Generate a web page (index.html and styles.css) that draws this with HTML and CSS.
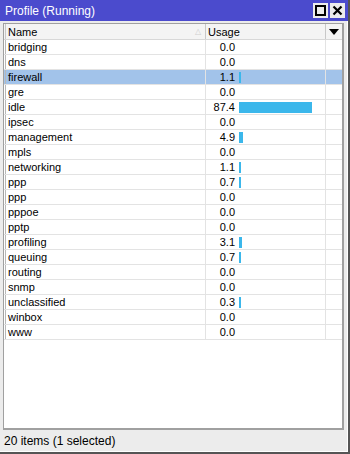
FILE: index.html
```html
<!DOCTYPE html>
<html lang="en">
<head>
  <meta charset="UTF-8">
  <title>Profile (Running)</title>
  <link rel="stylesheet" href="styles.css">
</head>
<body>
  <div class="window">
    <header class="titlebar">
      <span class="title">Profile (Running)</span>
      <div class="title-buttons">
        <button class="tbtn" aria-label="Maximize">
          <svg width="11" height="11" viewBox="0 0 11 11"><rect x="1" y="1" width="9" height="9" fill="none" stroke="#000" stroke-width="2"/></svg>
        </button>
        <button class="tbtn" aria-label="Close">
          <svg width="11" height="11" viewBox="0 0 11 11"><path d="M1.5 1.5 L9.5 9.5 M9.5 1.5 L1.5 9.5" stroke="#000" stroke-width="2.2"/></svg>
        </button>
      </div>
    </header>

    <div class="list">
      <div class="row head">
        <div class="cell flag"></div>
        <div class="cell name">Name<span class="sort">&#9651;</span></div>
        <div class="cell usage">Usage</div>
        <div class="cell menu">
          <svg width="10" height="6" viewBox="0 0 10 6"><path d="M0 0 H10 L5 6 Z" fill="#000"/></svg>
        </div>
      </div>
      <div id="rows"></div>
      <div class="filler"></div>
    </div>

    <footer class="status">20 items (1 selected)</footer>
  </div>

  <script>
    const items = [
      ['bridging', 0.0], ['dns', 0.0], ['firewall', 1.1], ['gre', 0.0],
      ['idle', 87.4], ['ipsec', 0.0], ['management', 4.9], ['mpls', 0.0],
      ['networking', 1.1], ['ppp', 0.7], ['ppp', 0.0], ['pppoe', 0.0],
      ['pptp', 0.0], ['profiling', 3.1], ['queuing', 0.7], ['routing', 0.0],
      ['snmp', 0.0], ['unclassified', 0.3], ['winbox', 0.0], ['www', 0.0]
    ];
    const rows = document.getElementById('rows');
    items.forEach(([name, value], i) => {
      const row = document.createElement('div');
      row.className = 'row' + (i === 2 ? ' selected' : '');
      let bar = '';
      if (value > 0) {
        const w = Math.max(2, Math.round(value * 0.83));
        bar = `<span class="bar" style="width:${w}px"></span>`;
      }
      row.innerHTML = `
        <div class="cell flag"></div>
        <div class="cell name">${name}</div>
        <div class="cell usage"><span class="num">${value.toFixed(1)}</span>${bar}</div>
        <div class="cell menu"></div>`;
      rows.appendChild(row);
    });
  </script>
</body>
</html>
```

FILE: styles.css
```css
* {
  margin: 0;
  padding: 0;
  box-sizing: border-box;
}

body {
  font-family: "Liberation Sans", Arial, sans-serif;
  font-size: 11px;
  color: #000;
  background: #ececec;
}

.window {
  width: 350px;
  height: 454px;
  display: flex;
  flex-direction: column;
  background: #ececec;
  border-right: 2px solid #555;
  border-bottom: 2px solid #555;
  box-shadow: inset -1px -1px 0 #fff;
}

.titlebar {
  height: 21px;
  background: #4b4bcd;
  display: flex;
  align-items: center;
  justify-content: space-between;
  padding: 0 3px 0 5px;
}

.title {
  color: #fff;
  font-size: 12px;
}

.title-buttons {
  display: flex;
  gap: 2px;
}

.tbtn {
  width: 15px;
  height: 15px;
  background: #ececec;
  border: none;
  display: flex;
  align-items: center;
  justify-content: center;
}

.list {
  flex: 1;
  margin: 2px 4px 0 3px;
  background: #fff;
  border: 1px solid #a0a0a0;
  border-right: 2px solid #a0a0a0;
  border-bottom: 2px solid #a0a0a0;
  display: flex;
  flex-direction: column;
}

.row {
  display: grid;
  grid-template-columns: 2px 200px 120px 1fr;
  height: 15px;
  border-bottom: 1px solid #e3e3e3;
}

.row.head {
  height: 16px;
  background: #f4f4f4;
  border-bottom: 1px solid #d8d8d8;
}

.cell {
  border-right: 1px solid #e3e3e3;
  display: flex;
  align-items: center;
  white-space: nowrap;
  overflow: hidden;
}

.row.head .cell {
  border-right-color: #c8c8c8;
}

.cell.flag {
  border-right-color: #b8b8b8;
}

.cell.name {
  padding-left: 2px;
}

.row.head .cell.name {
  justify-content: space-between;
  padding-right: 4px;
}

.sort {
  color: #cfcfcf;
  font-size: 8px;
}

.row.head .cell.usage {
  padding-left: 2px;
}

.cell.menu {
  border-right: none;
  justify-content: center;
}

.num {
  width: 29px;
  text-align: right;
  margin-right: 4px;
}

.bar {
  height: 11px;
  background: #3bb7eb;
}

.row.selected {
  background: #a2c3ea;
}

.filler {
  flex: 1;
}

.status {
  height: 22px;
  display: flex;
  align-items: center;
  padding-left: 4px;
  font-size: 12px;
}
```
